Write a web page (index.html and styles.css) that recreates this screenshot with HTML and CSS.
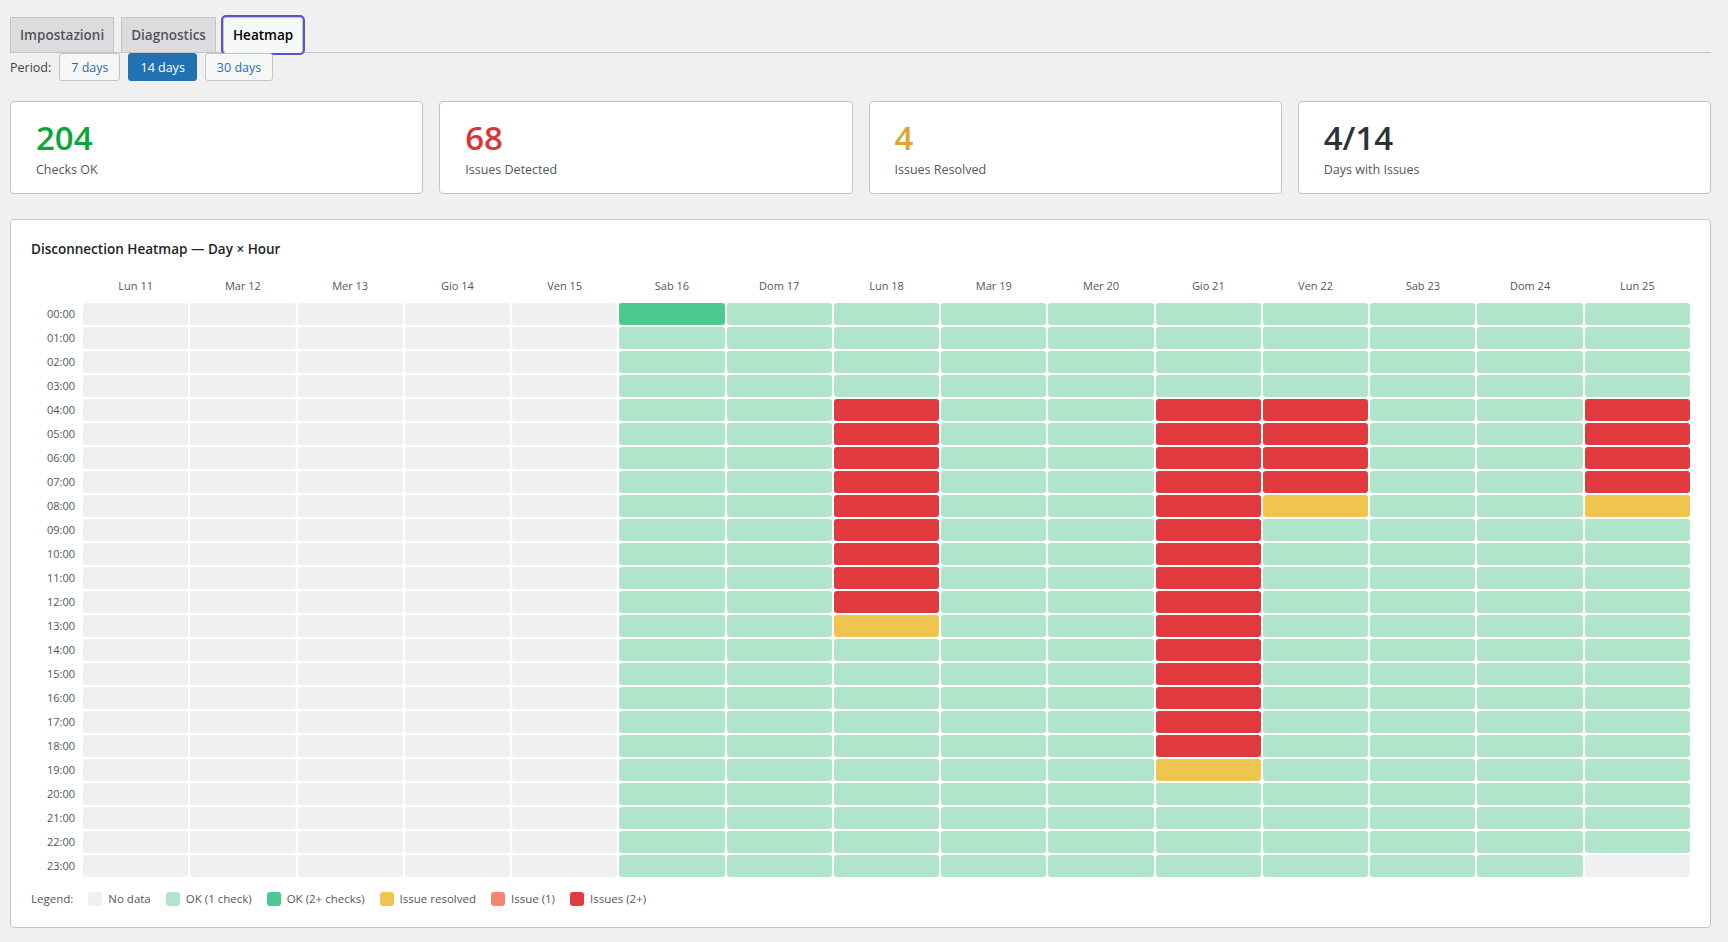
FILE: index.html
```html
<!DOCTYPE html>
<html lang="it">
<head>
    <meta charset="UTF-8">
    <meta name="viewport" content="width=device-width, initial-scale=1.0">
    <title>Heatmap</title>
    <link rel="stylesheet" href="styles.css">
</head>
<body>
    <div class="wrap">
        <!-- Tabs -->
        <nav class="tabs">
            <a href="#" class="tab">Impostazioni</a>
            <a href="#" class="tab">Diagnostics</a>
            <a href="#" class="tab tab-active">Heatmap</a>
        </nav>

        <!-- Period selector -->
        <div class="period">
            <span class="period-label">Period:</span>
            <button class="period-btn">7 days</button>
            <button class="period-btn period-btn-active">14 days</button>
            <button class="period-btn">30 days</button>
        </div>

        <!-- Summary cards -->
        <div class="stats">
            <div class="stat-card">
                <div class="stat-value stat-ok">204</div>
                <div class="stat-label">Checks OK</div>
            </div>
            <div class="stat-card">
                <div class="stat-value stat-issue">68</div>
                <div class="stat-label">Issues Detected</div>
            </div>
            <div class="stat-card">
                <div class="stat-value stat-resolved">4</div>
                <div class="stat-label">Issues Resolved</div>
            </div>
            <div class="stat-card">
                <div class="stat-value">4/14</div>
                <div class="stat-label">Days with Issues</div>
            </div>
        </div>

        <!-- Heatmap -->
        <section class="panel">
            <h2 class="panel-title">Disconnection Heatmap — Day × Hour</h2>
            <div class="heatmap" id="heatmap"></div>
            <div class="legend">
                <span class="legend-title">Legend:</span>
                <span class="legend-item"><i class="swatch cell-none"></i>No data</span>
                <span class="legend-item"><i class="swatch cell-ok"></i>OK (1 check)</span>
                <span class="legend-item"><i class="swatch cell-ok2"></i>OK (2+ checks)</span>
                <span class="legend-item"><i class="swatch cell-resolved"></i>Issue resolved</span>
                <span class="legend-item"><i class="swatch cell-issue"></i>Issue (1)</span>
                <span class="legend-item"><i class="swatch cell-issue2"></i>Issues (2+)</span>
            </div>
        </section>
    </div>

    <script src="script.js"></script>
</body>
</html>
```

FILE: styles.css
```css
/* Base */
* {
    box-sizing: border-box;
}

body {
    margin: 0;
    background: #f0f0f1;
    color: #3c434a;
    font-family: "Open Sans", "Noto Sans", sans-serif;
    font-size: 13px;
}

.wrap {
    padding: 0 17px 0 10px;
}

/* Tabs */
.tabs {
    display: flex;
    gap: 7px;
    padding-top: 17px;
    border-bottom: 1px solid #c3c4c7;
}

.tab {
    display: block;
    margin-bottom: -1px;
    padding: 5px 9px;
    border: 1px solid #c3c4c7;
    background: #dcdcde;
    color: #50575e;
    font-size: 13.5px;
    font-weight: 600;
    line-height: 24px;
    text-decoration: none;
}

.tab-active {
    background: #f6f7f7;
    color: #000;
    border-bottom-color: #f6f7f7;
    border-radius: 3px;
    outline: 2px solid #5753cd;
}

/* Period */
.period {
    display: flex;
    align-items: center;
    gap: 8px;
}

.period-label {
    color: #3c434a;
    font-size: 12.5px;
}

.period-btn {
    height: 28px;
    padding: 0 11px;
    border: 1px solid #c3c4c7;
    border-radius: 3px;
    background: #f6f7f7;
    color: #2271b1;
    font-family: inherit;
    font-size: 12.5px;
    cursor: pointer;
}

.period-btn-active {
    background: #2271b1;
    border-color: #2271b1;
    color: #fff;
}

/* Stats */
.stats {
    display: grid;
    grid-template-columns: repeat(4, 1fr);
    gap: 16px;
    margin-top: 20px;
}

.stat-card {
    background: #fff;
    border: 1px solid #c3c4c7;
    border-radius: 4px;
    padding: 16px 25px;
    height: 93px;
}

.stat-value {
    font-size: 33px;
    font-weight: 600;
    line-height: 40px;
    color: #2c3338;
}

.stat-ok { color: #0ea33b; }
.stat-issue { color: #d63638; }
.stat-resolved { color: #dba633; }

.stat-label {
    margin-top: 3px;
    font-size: 12.5px;
    line-height: 17px;
    color: #50575e;
}

/* Heatmap panel */
.panel {
    margin-top: 25px;
    background: #fff;
    border: 1px solid #c3c4c7;
    border-radius: 4px;
    padding: 20px;
}

.panel-title {
    margin: 0 0 20px;
    font-size: 13.5px;
    font-weight: 600;
    line-height: 18px;
    color: #1d2327;
}

.heatmap {
    display: grid;
    grid-template-columns: 50px repeat(15, 1fr);
    gap: 2px;
}

.hm-day {
    font-size: 11px;
    line-height: 16px;
    padding-bottom: 7px;
    text-align: center;
    color: #50575e;
}

.hm-hour {
    font-size: 11px;
    line-height: 22px;
    padding-right: 6px;
    text-align: right;
    color: #50575e;
}

.hm-cell {
    height: 22px;
    border-radius: 3px;
}

.cell-none { background: #f0f0f1; }
.cell-ok { background: #b1e5cb; }
.cell-ok2 { background: #4bc98e; }
.cell-resolved { background: #f0c54f; }
.cell-issue { background: #f48671; }
.cell-issue2 { background: #e0393e; }

/* Legend */
.legend {
    display: flex;
    align-items: center;
    gap: 15px;
    margin-top: 14px;
    font-size: 11.5px;
    line-height: 16px;
    color: #50575e;
}

.legend-item {
    display: flex;
    align-items: center;
    gap: 6px;
}

.swatch {
    display: inline-block;
    width: 14px;
    height: 14px;
    border-radius: 3px;
}
```

FILE: script.js
```js
// Status per hour: - no data, o ok, O ok 2+, y resolved, r issue, R issues 2+
const days = [
    ["Lun 11", "------------------------"],
    ["Mar 12", "------------------------"],
    ["Mer 13", "------------------------"],
    ["Gio 14", "------------------------"],
    ["Ven 15", "------------------------"],
    ["Sab 16", "Ooooooooooooooooooooooo"+"o"],
    ["Dom 17", "oooooooooooooooooooooooo"],
    ["Lun 18", "ooooRRRRRRRRRyoooooooooo"],
    ["Mar 19", "oooooooooooooooooooooooo"],
    ["Mer 20", "oooooooooooooooooooooooo"],
    ["Gio 21", "ooooRRRRRRRRRRRRRRRyoooo"],
    ["Ven 22", "ooooRRRRyooooooooooooooo"],
    ["Sab 23", "oooooooooooooooooooooooo"],
    ["Dom 24", "oooooooooooooooooooooooo"],
    ["Lun 25", "ooooRRRRyoooooooooooooo-"]
];

const classes = {
    "-": "cell-none",
    "o": "cell-ok",
    "O": "cell-ok2",
    "y": "cell-resolved",
    "r": "cell-issue",
    "R": "cell-issue2"
};

const heatmap = document.getElementById("heatmap");
let html = '<div></div>';

days.forEach(d => {
    html += `<div class="hm-day">${d[0]}</div>`;
});

for (let h = 0; h < 24; h++) {
    const label = String(h).padStart(2, "0") + ":00";
    html += `<div class="hm-hour">${label}</div>`;
    days.forEach(d => {
        html += `<div class="hm-cell ${classes[d[1][h]]}"></div>`;
    });
}

heatmap.innerHTML = html;
```
